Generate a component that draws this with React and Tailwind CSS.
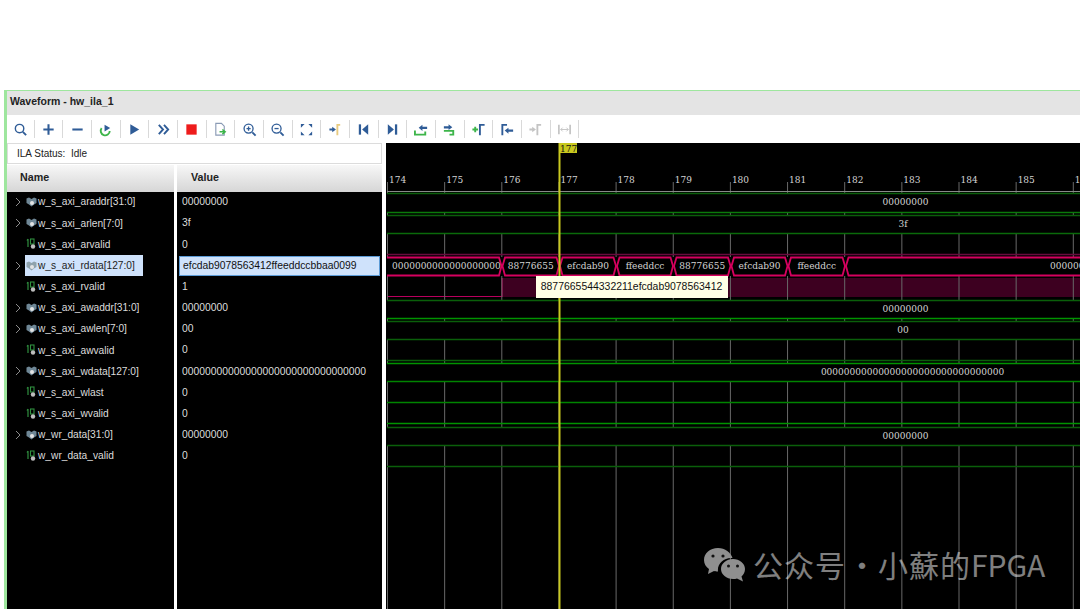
const signals = [
  { name: "w_s_axi_araddr[31:0]", value: "00000000", bus: true },
  { name: "w_s_axi_arlen[7:0]", value: "3f", bus: true },
  { name: "w_s_axi_arvalid", value: "0" },
  { name: "w_s_axi_rdata[127:0]", value: "efcdab9078563412ffeeddccbbaa0099", bus: true, selected: true },
  { name: "w_s_axi_rvalid", value: "1" },
  { name: "w_s_axi_awaddr[31:0]", value: "00000000", bus: true },
  { name: "w_s_axi_awlen[7:0]", value: "00", bus: true },
  { name: "w_s_axi_awvalid", value: "0" },
  { name: "w_s_axi_wdata[127:0]", value: "00000000000000000000000000000000", bus: true },
  { name: "w_s_axi_wlast", value: "0" },
  { name: "w_s_axi_wvalid", value: "0" },
  { name: "w_wr_data[31:0]", value: "00000000", bus: true },
  { name: "w_wr_data_valid", value: "0" },
];

const BLUE = "#2f5c97";
const GREEN = "#3db54a";
const TAN = "#e8cb80";
const GRAY = "#c4c4c4";

function Marker({ color, x = 10 }) {
  return <path d={`M${x} 14V3h3`} fill="none" stroke={color} strokeWidth="2" />;
}

const tools = [
  <g fill="none" stroke={BLUE} strokeWidth="1.5"><circle cx="7" cy="7" r="4.5" /><path d="M10.5 10.5l3.5 3.5" strokeWidth="2" /></g>,
  <path d="M8 2.5v11M2.5 8h11" stroke={BLUE} strokeWidth="2.2" />,
  <path d="M2.5 8h11" stroke={BLUE} strokeWidth="2.2" />,
  <g><path d="M12.5 9.5a4.8 4.8 0 1 1-8.6-3" fill="none" stroke={GREEN} strokeWidth="2" /><path d="M7 3l6 3.5L7 10z" fill={BLUE} /></g>,
  <path d="M3.5 2.5L13 8l-9.500 5.500z" fill={BLUE} />,
  <path d="M3 3l4.500 5L3 13M8.500 3L13 8l-4.500 5" fill="none" stroke={BLUE} strokeWidth="2" />,
  <rect x="2.500" y="2.500" width="11" height="11" fill="#ee1c1c" />,
  <g><path d="M3 1.500h6l3 3V14H3z" fill="#fff" stroke="#8a9bb5" strokeWidth="1.200" /><path d="M7 10.500h5M10 8l3 2.500L10 13" fill="none" stroke={GREEN} strokeWidth="1.600" /></g>,
  <g fill="none" stroke={BLUE} strokeWidth="1.400"><circle cx="7" cy="7" r="4.800" /><path d="M11 11l3.500 3.500" strokeWidth="2" /><path d="M4.800 7h4.400M7 4.800v4.400" /></g>,
  <g fill="none" stroke={BLUE} strokeWidth="1.400"><circle cx="7" cy="7" r="4.800" /><path d="M11 11l3.500 3.500" strokeWidth="2" /><path d="M4.800 7h4.400" /></g>,
  <path d="M2 2h4L2 6zM14 2v4l-4-4zM2 14v-4l4 4zM14 14h-4l4-4z" fill={BLUE} />,
  <g><Marker color={TAN} /><path d="M1.500 7h3V5l4 3-4 3V9h-3z" fill={BLUE} /></g>,
  <g><rect x="3" y="2.500" width="2.400" height="11" fill={BLUE} /><path d="M13 2.500v11L6.500 8z" fill={BLUE} /></g>,
  <g><rect x="10.600" y="2.500" width="2.400" height="11" fill={BLUE} /><path d="M3 2.500v11L9.500 8z" fill={BLUE} /></g>,
  <g><path d="M1 9v4.500h11V10" fill="none" stroke={GREEN} strokeWidth="2" /><path d="M5 6l4-3v2h5v2.500H9v2z" fill={BLUE} /></g>,
  <g><path d="M2 9.500h10v4H8" fill="none" stroke={GREEN} strokeWidth="2" /><path d="M2 4.500h5v-2l4 3-4 3v-1.500H2z" fill={BLUE} /></g>,
  <g><path d="M9.500 14V3h5" fill="none" stroke={BLUE} strokeWidth="2" /><path d="M1.500 8h6M4.500 5v6" stroke={GREEN} strokeWidth="2" /></g>,
  <g><path d="M2.500 14V3h5" fill="none" stroke={BLUE} strokeWidth="2" /><path d="M5 9l4-3v2h5v2.500H9v2z" fill={BLUE} /></g>,
  <g><path d="M10 14V3h4" fill="none" stroke={GRAY} strokeWidth="2" /><path d="M1.500 7h3V5l4 3-4 3V9h-3z" fill={GRAY} /></g>,
  <g fill="none" stroke={GRAY} strokeWidth="1.300"><path d="M2 3v10M14 3v10" strokeWidth="1.800" /><path d="M4 8h8M6 6L4 8l2 2M10 6l2 2-2 2" strokeWidth="1" /></g>,
];

function Chevron() {
  return (
    <svg width="6" height="10" viewBox="0 0 6 10" className="shrink-0">
      <path d="M1 1l4 4-4 4" fill="none" stroke="#8c8c8c" strokeWidth="1" />
    </svg>
  );
}

function BusIcon({ selected }) {
  return (
    <svg width="11" height="10" viewBox="0 0 11 10" className="shrink-0">
      <path d="M0.500 1.500L3 0.500 5.500 2 8 0.500l2.500 1V6L8 7.500 5.500 9.500 3 7.500 0.500 6z" fill={selected ? "#8fa3ad" : "#6f8796"} />
      <circle cx="6" cy="6" r="2" fill="#e4e4e4" />
    </svg>
  );
}

function BitIcon() {
  return (
    <svg width="11" height="12" viewBox="0 0 11 12" className="shrink-0">
      <path d="M2 1v8M1 2.500L2 1" fill="none" stroke="#2f8f3f" strokeWidth="1.200" />
      <rect x="4.500" y="1" width="3.500" height="5" fill="none" stroke="#2f8f3f" strokeWidth="1.100" />
      <circle cx="7" cy="8.500" r="2.200" fill="#bdbdbd" />
    </svg>
  );
}

function SignalName({ signal }) {
  return (
    <div className="h-[21.17px] flex items-center">
      <div className="w-[9px] ml-[6px] mr-[3px] flex justify-center">{signal.bus && <Chevron />}</div>
      <div className={`h-[21px] flex items-center pl-[1px] ${signal.selected ? "w-[118px] bg-[#cfe2fb] text-[#222]" : "text-[#dcdcdc]"}`}>
        <div className="w-[11px] flex justify-end">{signal.bus ? <BusIcon selected={signal.selected} /> : <BitIcon />}</div>
        <span className="ml-[1px] whitespace-nowrap">{signal.name}</span>
      </div>
    </div>
  );
}

function SignalValue({ signal }) {
  return (
    <div className="h-[21.17px] flex items-center">
      <div className={`ml-[2px] h-[20px] w-[201px] flex items-center pl-[3px] whitespace-nowrap ${signal.selected ? "bg-[#cfe2fb] border border-[#5c9bd6] text-[#111]" : "text-[#dcdcdc]"}`}>
        {signal.value}
      </div>
    </div>
  );
}

const GRID_X = Array.from({ length: 13 }, (_, i) => 387.5 + i * 57.15);

const busRows = [
  [193, 212, "#0a5f0a", "#0a7a0a", "00000000", 905.5],
  [215, 233, "#0a5f0a", "#0a6a0a", "3f", 903],
  [300, 318, "#0a5f0a", "#009400", "00000000", 905.5],
  [321, 339, "#0a5f0a", "#0a5f0a", "00", 903],
  [363, 381, "#009400", "#008400", "00000000000000000000000000000000", 912.5],
  [427, 445, "#0a5f0a", "#0a5f0a", "00000000", 905.5],
];

const lowLines = [
  [254, "#6a0a3e"],
  [360, "#0a5f0a"],
  [402, "#008400"],
  [423, "#009400"],
  [466, "#0a5f0a"],
];

const rdataSegs = [
  [502, 559.5, "88776655"],
  [559.5, 616.5, "efcdab90"],
  [616.5, 673.5, "ffeeddcc"],
  [673.5, 731, "88776655"],
  [731, 788, "efcdab90"],
  [788, 845.5, "ffeeddcc"],
];

function hex(a, b) {
  return `M${a + 3} 257.500H${b - 3}L${b - 0.5} 266L${b - 3} 275.500H${a + 3}L${a + 0.5} 266Z`;
}

function Wave() {
  return (
    <svg viewBox="386 143 694 466" className="block w-[694px] h-[466px] font-['DejaVu_Serif',serif]">
      <rect x="386" y="143" width="694" height="466" fill="#000" />
      <rect x="502" y="278" width="578" height="19" fill="#3d0020" />
      <path d="M387 296.500H502V278" fill="none" stroke="#b8005c" strokeWidth="1.200" />
      {GRID_X.map((x) => (
        <path key={x} d={`M${x} 182V609`} stroke="#686868" strokeWidth="1" />
      ))}
      <path d="M387 191.500H1080" stroke="#8a8a8a" strokeWidth="1" />
      {GRID_X.map((x, i) => (
        <text key={x} x={x + 1.5} y="183" fontSize="9" fill="#d4d4d4">{174 + i}</text>
      ))}
      {busRows.map(([top, bottom, c1, c2, label, cx]) => (
        <g key={top}>
          <rect x="387" y={top} width="693" height={bottom - top} fill="#000" />
          <path d={`M387 ${top + 0.5}H1080`} stroke={c1} strokeWidth="1.300" />
          <path d={`M387 ${bottom + 0.5}H1080`} stroke={c2} strokeWidth="1.300" />
          <text x={cx} y={top + 11.5} textAnchor="middle" fontSize="9" fill="#d4d4d4">{label}</text>
        </g>
      ))}
      {lowLines.map(([y, c]) => (
        <path key={y} d={`M387 ${y + 0.5}H1080`} stroke={c} strokeWidth="1.300" />
      ))}
      <rect x="387" y="257" width="693" height="19" fill="#000" />
      <g fill="none" stroke="#d6005f" strokeWidth="1.800">
        <path d="M387 257.500H499L501.500 266L499 275.500H387" />
        {rdataSegs.map(([a, b]) => (
          <path key={a} d={hex(a, b)} />
        ))}
        <path d="M1080 257.500H848.500L846 266L848.500 275.500H1080" />
      </g>
      <text x="392" y="269" fontSize="9" fill="#d4d4d4">0000000000000000000</text>
      {rdataSegs.map(([a, b, label]) => (
        <text key={a} x={(a + b) / 2} y="269" textAnchor="middle" fontSize="9" fill="#d4d4d4">{label}</text>
      ))}
      <text x="1050" y="269" fontSize="9" fill="#d4d4d4">00000000</text>
      <path d="M559.500 143V609" stroke="#c8c81e" strokeWidth="2" />
      <rect x="559" y="143" width="18" height="10" fill="#c8c81e" />
      <text x="560" y="151.500" fontSize="9" fill="#111">177</text>
    </svg>
  );
}

function Watermark() {
  return (
    <div className="absolute left-[703px] top-[544px] flex items-center text-white/50 font-['Noto_Sans_CJK_SC',sans-serif] text-[30px] leading-[40px] whitespace-nowrap">
      <svg width="42" height="36" viewBox="0 0 42 36" className="mr-[8px] mt-[2px]">
        <path d="M15 1C7 1 1 6 1 13c0 4 2 7 5 9l-1 5 6-3c1 .3 2 .5 4 .5 0-.5-.1-1-.1-1.500C14.900 16 21 11 28 11c.5 0 1 0 1.500.100C28 5.500 22 1 15 1z" fill="#8f8f8f" />
        <path d="M30 12c-6.500 0-12 4.500-12 10s5.500 10 12 10c1.500 0 3-.2 4-.6l6 3.100-1.500-5c2-2 3.500-4.500 3.500-7.500 0-5.500-5.500-10-12-10z" fill="#8f8f8f" />
        <circle cx="10" cy="9" r="1.600" fill="#111" />
        <circle cx="20" cy="9" r="1.600" fill="#111" />
        <circle cx="25.500" cy="19" r="1.500" fill="#111" />
        <circle cx="34.500" cy="19" r="1.500" fill="#111" />
      </svg>
      <span>
        <span className="tracking-[1px]">公众号</span>
        <span className="mx-[1px]">·</span>
        <span className="tracking-[1px]">小蘇的</span>FPGA
      </span>
    </div>
  );
}

export default function App() {
  return (
    <div className="relative w-[1080px] h-[609px] overflow-hidden bg-white font-['Liberation_Sans',Arial,sans-serif]">
      <div className="h-[90px]" />
      <div className="h-[519px] ml-[4px] border-l-[3px] border-t border-[#9ee69e] flex flex-col">
        <div className="h-[24px] bg-[#e4e4e4] flex items-center pl-[3px] pb-[2px] text-[10.500px] font-bold text-[#222]">
          Waveform - hw_ila_1
        </div>
        <div className="h-[28px] bg-white flex items-center">
          {tools.map((icon, i) => (
            <div key={i} className={`h-[18px] flex items-center justify-center border-r border-[#d9d9d9] ${i === 0 ? "w-[27.68px]" : "w-[28.68px]"}`}>
              <svg width="15" height="15" viewBox="0 0 16 16">{icon}</svg>
            </div>
          ))}
        </div>
        <div className="flex-1 flex min-h-0">
          <div className="w-[379px] flex flex-col bg-white">
            <div className="h-[21px] mr-[4px] flex items-center pl-[9px] border border-[#dcdcdc] text-[10px] text-[#222]">
              ILA Status:&nbsp; Idle
            </div>
            <div className="h-[26.500px] mt-px flex text-[10.700px] font-bold text-[#222]">
              <div className="w-[167px] pb-[2px] bg-gradient-to-b from-[#f7f7f7] to-[#d6d6d6] flex items-center pl-[13px]">Name</div>
              <div className="w-[205px] pb-[2px] ml-[3px] bg-gradient-to-b from-[#f7f7f7] to-[#d6d6d6] flex items-center pl-[14px]">Value</div>
            </div>
            <div className="flex-1 flex">
              <div className="w-[167px] bg-black text-[10.200px]">
                {signals.map((s) => <SignalName key={s.name} signal={s} />)}
              </div>
              <div className="w-[205px] ml-[3px] bg-black text-[10.350px]">
                {signals.map((s) => <SignalValue key={s.name} signal={s} />)}
              </div>
            </div>
          </div>
          <div className="relative w-[694px]">
            <Wave />
            <div className="absolute left-[149.500px] top-[133px] w-[192px] h-[22px] bg-[#ffffe6] flex items-center justify-center text-[10.450px] text-[#111] whitespace-nowrap">
              8877665544332211efcdab9078563412
            </div>
          </div>
        </div>
      </div>
      <Watermark />
    </div>
  );
}
